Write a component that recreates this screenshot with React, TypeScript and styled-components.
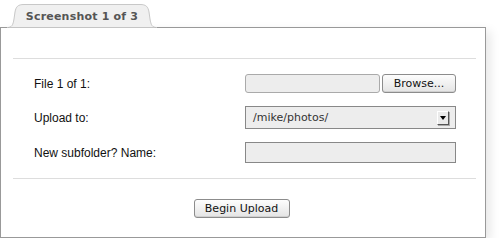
import styled, { createGlobalStyle } from "styled-components";

const GlobalStyle = createGlobalStyle`
  body {
    margin: 0;
    background: #fff;
    font-family: "Liberation Sans", Arial, sans-serif;
  }
`;

const Page = styled.div`
  padding-top: 4px;
  width: 486px;
`;

const Tab = styled.div`
  position: relative;
  margin-left: 7px;
  width: 150px;
  height: 23px;
  display: flex;
  align-items: center;
  justify-content: center;

  svg {
    position: absolute;
    left: 0;
    top: 0;
  }
`;

const TabLabel = styled.span`
  position: relative;
  font-family: "DejaVu Sans", sans-serif;
  font-weight: bold;
  font-size: 11px;
  letter-spacing: 0.2px;
  color: #555;
  padding-top: 2px;
`;

const Panel = styled.div`
  box-sizing: border-box;
  height: 211px;
  padding: 30px 9px 0 12px;
  border: 1px solid #999;
  background: #fff;
  box-shadow: 4px 4px 10px rgba(0, 0, 0, 0.1);
`;

const Separator = styled.div`
  border-top: 1px solid #ddd;
`;

const Form = styled.div`
  display: grid;
  grid-template-columns: 211px 211px;
  row-gap: 13px;
  align-items: center;
  padding: 15px 0 15px 21px;
`;

const Label = styled.label`
  font-size: 12px;
  color: #111;
`;

const FileField = styled.div`
  display: flex;
  gap: 2px;
`;

const Field = styled.div<{ $h: number; $round?: boolean; $border?: string }>`
  box-sizing: border-box;
  height: ${(p) => p.$h}px;
  flex: 1;
  background: #ededed;
  border: 1px solid ${(p) => p.$border || "#888"};
  border-radius: ${(p) => (p.$round ? "3px" : "0")};
`;

const Button = styled.button<{ $w: number }>`
  box-sizing: border-box;
  width: ${(p) => p.$w}px;
  height: 19px;
  padding: 0;
  font-family: "DejaVu Sans", sans-serif;
  font-size: 11px;
  color: #111;
  border: 1px solid #8c8c8c;
  border-radius: 3px;
  background: linear-gradient(#fdfdfd, #e4e4e4);
  box-shadow: inset 0 -1px 0 #d0d0d0;
`;

const Select = styled.div`
  box-sizing: border-box;
  height: 23px;
  display: flex;
  align-items: center;
  justify-content: space-between;
  padding: 0 6px 0 7px;
  background: #ededed;
  border: 1px solid #888;
  font-family: "DejaVu Sans", sans-serif;
  font-size: 11px;
  color: #333;
`;

const Arrow = styled.span`
  box-sizing: border-box;
  width: 12px;
  height: 14px;
  display: flex;
  align-items: center;
  justify-content: center;
  background: #eaeaea;
  border-top: 1px solid #fff;
  border-left: 1px solid #fff;
  border-right: 1px solid #555;
  border-bottom: 1px solid #555;
  box-shadow: 1px 1px 0 #aaa;
`;

const Actions = styled.div`
  display: flex;
  justify-content: center;
  padding-top: 20px;
  margin-right: 6px;
`;

export default function App() {
  return (
    <>
      <GlobalStyle />
      <Page>
        <Tab>
          <svg width="150" height="24" viewBox="0 0 150 24">
            <path
              d="M0,23.5 C5,23.5 6,21 7,15 L8,8 C9,2.5 11,0.5 17,0.5 L133,0.5 C139,0.5 141,2.5 142,8 L143,15 C144,21 145,23.5 150,23.5"
              fill="#f0f0f0"
              stroke="#c8c8c8"
            />
          </svg>
          <TabLabel>Screenshot 1 of 3</TabLabel>
        </Tab>
        <Panel>
          <Separator />
          <Form>
            <Label>File 1 of 1:</Label>
            <FileField>
              <Field $h={19} $round $border="#aaa" />
              <Button $w={74}>Browse...</Button>
            </FileField>
            <Label>Upload to:</Label>
            <Select>
              <span>/mike/photos/</span>
              <Arrow>
                <svg width="6" height="4" viewBox="0 0 6 4">
                  <path d="M0,0 L6,0 L3,4 Z" fill="#000" />
                </svg>
              </Arrow>
            </Select>
            <Label>New subfolder? Name:</Label>
            <Field $h={21} />
          </Form>
          <Separator />
          <Actions>
            <Button $w={96}>Begin Upload</Button>
          </Actions>
        </Panel>
      </Page>
    </>
  );
}
